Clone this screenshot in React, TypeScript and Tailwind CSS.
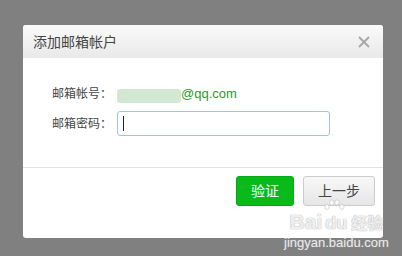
import React from "react";

export default function App() {
  const font = { fontFamily: '"Liberation Sans", "Noto Sans CJK SC", sans-serif' };
  return (
    <div className="relative w-[402px] h-[256px] bg-[#808080] pt-[25px] pl-[23px] overflow-hidden" style={font}>
      <div className="w-[360px] h-[213px] bg-white rounded-[3px] flex flex-col overflow-hidden">
        {/* header */}
        <div className="h-[33px] flex items-center justify-between pl-[10px] pr-[13px] bg-gradient-to-b from-[#fafafa] to-[#e9e9e9]">
          <span className="text-[14px] text-[#444] leading-none">添加邮箱帐户</span>
          <svg width="12" height="12" viewBox="0 0 12 12">
            <path d="M1 1 L11 11 M11 1 L1 11" stroke="#a6a6a6" strokeWidth="1.8" />
          </svg>
        </div>
        {/* body */}
        <div className="h-[109px] flex flex-col pt-[26px] pl-[29px] gap-[7px]">
          <div className="flex items-center h-[20px]">
            <span className="w-[65px] text-[12px] text-[#444]">邮箱帐号：</span>
            <div className="flex items-center text-[13px] text-[#2a9a2a]">
              <span className="w-[64px] h-[14px] bg-[#d3e8d3] rounded-[3px] mt-[3px]" />
              <span>@qq.com</span>
            </div>
          </div>
          <div className="flex items-center h-[25px]">
            <span className="w-[65px] text-[12px] text-[#444]">邮箱密码：</span>
            <div className="w-[213px] h-[25px] border border-[#9fc3e6] rounded-[3px] flex items-center pl-[5px]">
              <span className="w-px h-[15px] bg-[#222]" />
            </div>
          </div>
        </div>
        {/* footer */}
        <div className="flex-1 border-t border-[#e2e2e2] flex justify-end items-start pt-[8px] pr-[8px] gap-[9px]">
          <button className="w-[58px] h-[30px] rounded-[3px] bg-[#08bb1a] border border-[#06a816] text-white text-[14px] leading-none">
            验证
          </button>
          <button className="w-[72px] h-[30px] rounded-[3px] bg-gradient-to-b from-[#f8f8f8] to-[#e6e6e6] border border-[#cccccc] text-[#444] text-[14px] leading-none">
            上一步
          </button>
        </div>
      </div>
      {/* watermark */}
      <div className="absolute left-[284px] top-[211px] flex flex-col items-center pointer-events-none">
        <div
          className="flex items-end text-[21px] font-bold leading-none text-white/80"
          style={{ textShadow: "0 0 1px #b0b0b0, 0 0 1px #b0b0b0" }}
        >
          <span>Bai</span>
          <span className="relative ml-[1px]">
            <svg className="absolute -top-[12px] left-[0px]" width="22" height="14" viewBox="0 0 24 16">
              <g fill="white" stroke="#c0c0c0" strokeWidth="0.8" opacity="0.85">
                <ellipse cx="4" cy="9" rx="2.5" ry="3" />
                <ellipse cx="9.5" cy="4" rx="2.5" ry="3" />
                <ellipse cx="15.5" cy="4" rx="2.5" ry="3" />
                <ellipse cx="21" cy="9" rx="2.5" ry="3" />
              </g>
            </svg>
            <span className="px-[1px] border border-white/80 rounded-[3px] text-[18px]">du</span>
          </span>
          <span className="text-[16px] ml-[2px]">经验</span>
        </div>
        <div
          className="text-[13px] text-white/80 mt-[4px] leading-none"
          style={{ textShadow: "0 0 1px #a0a0a0" }}
        >
          jingyan.baidu.com
        </div>
      </div>
    </div>
  );
}
